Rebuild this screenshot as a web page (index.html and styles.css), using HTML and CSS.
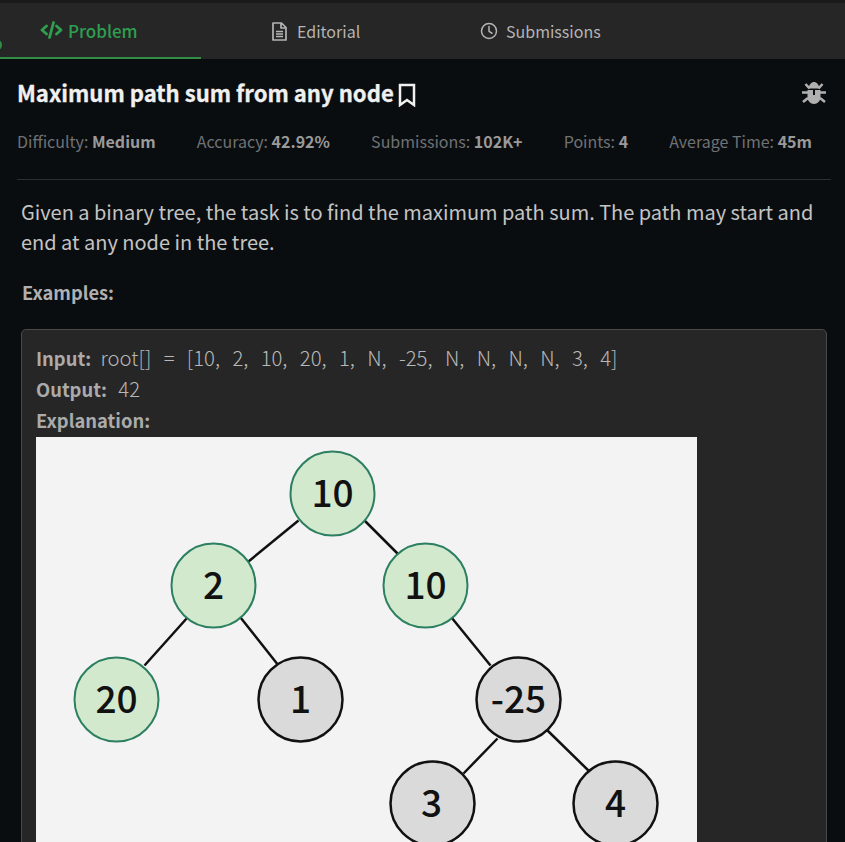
FILE: index.html
```html
<!DOCTYPE html>
<html lang="en">
<head>
<meta charset="utf-8">
<title>Maximum path sum from any node</title>
<link rel="stylesheet" href="styles.css">
</head>
<body>
<nav class="tabs">
  <span class="dot"></span>
  <a class="tab tab-problem">
    <svg class="tab-icon" viewBox="0 0 22 18" fill="none" stroke="currentColor" stroke-width="2.800" stroke-linecap="round" stroke-linejoin="round"><path d="M6 5 1.500 9 6 13M16 5l4.500 4-4.500 4M13 1.500 9 16.500"/></svg>
    <span>Problem</span>
  </a>
  <a class="tab tab-editorial">
    <svg class="tab-icon" viewBox="0 0 15 19" fill="none" stroke="currentColor" stroke-width="1.700" stroke-linejoin="round"><path d="M1 1h8.500L14 5.500V18H1zM9 1v5h5M4 9.500h7M4 12h7M4 14.500h7"/></svg>
    <span>Editorial</span>
  </a>
  <a class="tab tab-submissions">
    <svg class="tab-icon" viewBox="0 0 24 24" fill="none" stroke="currentColor" stroke-width="2" stroke-linecap="round" stroke-linejoin="round"><circle cx="12" cy="12" r="10"/><path d="M12 6v6.500l4 2.500"/></svg>
    <span>Submissions</span>
  </a>
</nav>
<main class="content">
  <header class="title-row">
    <h1 class="title">Maximum path sum from any node</h1>
    <svg class="bookmark" viewBox="0 0 18 24" fill="none" stroke="currentColor" stroke-width="2.500" stroke-linejoin="miter"><path d="M2 2h14v20l-7-5-7 5z"/></svg>
    <svg class="bug" viewBox="0 0 24 24" fill="currentColor"><path d="M6.500 7.500C7 3.500 9.500 1 12 1s5 2.500 5.500 6.500zM5.500 9h5.500v5h2V9h5.500v7c0 4-3 7-6.500 7s-6.500-3-6.500-7z"/><path d="M3.500 3 7.500 7.500M20.500 3l-4 4.500M0 11.500h6M24 11.500h-6M1 21l5-4M23 21l-5-4" stroke="currentColor" stroke-width="2.600" fill="none"/></svg>
  </header>
  <ul class="stats">
    <li>Difficulty: <b>Medium</b></li>
    <li>Accuracy: <b>42.92%</b></li>
    <li>Submissions: <b>102K+</b></li>
    <li>Points: <b>4</b></li>
    <li>Average Time: <b>45m</b></li>
  </ul>
  <p class="lead">Given a binary tree, the task is to find the maximum path sum. The path may start and end at any node in the tree.</p>
  <p class="examples">Examples:</p>
  <section class="example">
    <div class="line"><b>Input:</b>&nbsp; <span class="value">root[] &nbsp;=&nbsp; [10,&nbsp; 2,&nbsp; 10,&nbsp; 20,&nbsp; 1,&nbsp; N,&nbsp; -25,&nbsp; N,&nbsp; N,&nbsp; N,&nbsp; N,&nbsp; 3,&nbsp; 4]</span></div>
    <div class="line"><b>Output:</b>&nbsp; <span class="value value-gap">42</span></div>
    <div class="line line-last"><b>Explanation:</b></div>
    <svg class="tree" viewBox="0 0 661 405">
      <g class="tree-art">
        <g class="edges">
          <path d="M263 83 213 124M329 83 362 116M152 180 109 228M205 180 243 228M416 180 455 228M462 301 428 336M512 293 556 336"/>
        </g>
        <circle class="node-on" cx="297" cy="56" r="42"/>
        <circle class="node-on" cx="178" cy="148" r="42"/>
        <circle class="node-on" cx="390" cy="148" r="42"/>
        <circle class="node-on" cx="81" cy="262" r="42"/>
        <circle class="node-off" cx="265" cy="262" r="42"/>
        <circle class="node-off" cx="483" cy="262" r="42"/>
        <circle class="node-off" cx="397" cy="366" r="42"/>
        <circle class="node-off" cx="580" cy="366" r="42"/>
        <text x="297" y="69">10</text>
        <text x="178" y="161">2</text>
        <text x="390" y="161">10</text>
        <text x="81" y="275">20</text>
        <text x="265" y="275">1</text>
        <text x="483" y="275">-25</text>
        <text x="396" y="379">3</text>
        <text x="580" y="379">4</text>
      </g>
    </svg>
  </section>
</main>
</body>
</html>
```
FILE: styles.css
```css
* { box-sizing: border-box; }
html, body { margin: 0; height: 100%; overflow: hidden; }
body {
  background: #0a0d0f;
  color: #c8c8c8;
  font-family: "Noto Sans CJK SC", "Noto Sans", sans-serif;
  padding-top: 3px;
  box-shadow: inset 0 3px 0 #1a1a1a;
}
.tabs {
  position: relative;
  display: flex;
  height: 56px;
  background: #262626;
  font-size: 16px;
  color: #b4b4b4;
}
.dot {
  position: absolute;
  left: -6px;
  top: 37px;
  width: 8px;
  height: 10px;
  border: 2px solid #2f8d46;
  border-radius: 50%;
}
.tab { display: flex; align-items: center; gap: 5px; height: 56px; }
.tab-icon { width: 18px; height: 18px; flex: none; }
.tab-problem {
  width: 201px;
  padding-left: 40px;
  font-size: 17px;
  color: #2f9e4f;
  font-weight: 500;
  border-bottom: 2px solid #2f8d46;
}
.tab-problem .tab-icon { width: 23px; height: 18px; }
.tab-editorial { width: 208px; padding-left: 71px; }
.tab-editorial .tab-icon { width: 15px; height: 19px; margin-right: 5px; }
.tab-submissions { padding-left: 71px; gap: 8px; }
.content { padding: 0 14px 0 17px; }
.title-row { display: flex; align-items: center; height: 70px; }
.title { margin: 0 0 4px; font-size: 22.100px; font-weight: 700; color: #f0f0f0; line-height: 66px; -webkit-text-stroke: 0.3px #f0f0f0; }
.bookmark { width: 18px; height: 24px; margin: 2px 0 0 4px; color: #f0f0f0; }
.bug { width: 24px; height: 24px; margin: 0 5px 3px auto; color: #b0b0b0; }
.stats {
  display: flex;
  justify-content: space-between;
  list-style: none;
  margin: 0;
  padding: 0 19px 26px 0;
  font-size: 16px;
  line-height: 24px;
  color: #6f7275;
  border-bottom: 1px solid #2a2e30;
}
.stats b { color: #9a9a9a; }
.lead { margin: 17px 0 0 4px; font-size: 19.980px; line-height: 30px; color: #c4c4c4; }
.examples { margin: 20px 0 0 5px; font-size: 18.300px; line-height: 30px; font-weight: 700; color: #b0b0b0; }
.example {
  margin: 22px 0 0 4px;
  width: 806px;
  height: 600px;
  padding: 12px 14px 0;
  background: #262626;
  border: 1px solid #4a4a4a;
  border-radius: 5px;
  font-size: 18.400px;
  line-height: 31px;
  color: #a8a8a8;
}
.line { height: 31px; white-space: nowrap; }
.line-last { height: 33px; line-height: 33px; }
.line b { color: #ababab; }
.value { font-size: 20.300px; font-weight: 300; color: #b8b8b8; word-spacing: 1.700px; margin-left: 1px; }
.value-gap { margin-left: 3px; }
.tree { display: block; width: 661px; height: 405px; background: #f3f3f3; }
.tree-art { transform: translate(-0.500px, 0.500px); }
.edges path { fill: none; stroke: #111; stroke-width: 2.500; }
.node-on { fill: #d2e9cd; stroke: #2c7f60; stroke-width: 2; }
.node-off { fill: #dadada; stroke: #111; stroke-width: 2.500; }
.tree text {
  font-family: "Noto Sans CJK SC", "Noto Sans", sans-serif;
  font-size: 37px;
  font-weight: 500;
  text-anchor: middle;
  fill: #111;
}
```
